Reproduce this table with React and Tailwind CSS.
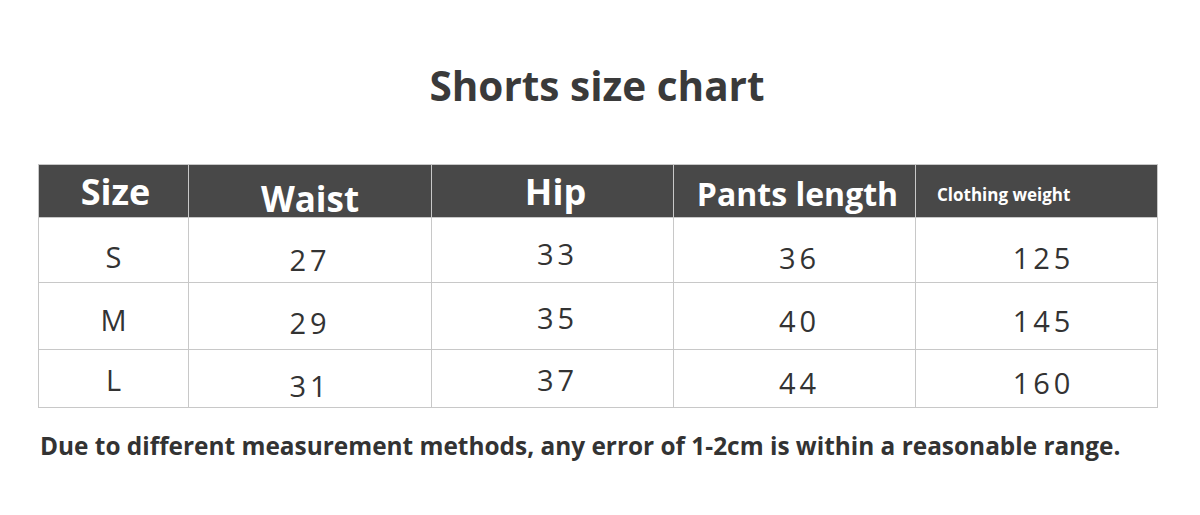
const headers = [
  { label: 'Size', cls: 'text-[36px] pt-[2px] pl-[4px]' },
  { label: 'Waist', cls: 'text-[35px] pt-[14px]' },
  { label: 'Hip', cls: 'text-[36px] pt-[2px] pl-[6px]' },
  { label: 'Pants length', cls: 'text-[32px] pt-[6px] pl-[6px]' },
  { label: 'Clothing weight', cls: 'text-[17px] text-left pl-[21px] pt-[6px]' },
];

// per-cell nudges so the values sit where the chart has them
const shift = ['', '', 'pl-[10px]', 'pl-[10px]', 'pl-[14px]'];

const rows = [
  { h: 'h-[65px]', cells: ['S', '27', '33', '36', '125'], off: ['pt-[12px]', 'pt-[18px]', 'pt-[6px]', 'pt-[14px]', 'pt-[14px]'] },
  { h: 'h-[67px]', cells: ['M', '29', '35', '40', '145'], off: ['pt-[6px]', 'pt-[12px]', 'pt-[2px]', 'pt-[8px]', 'pt-[8px]'] },
  { h: 'h-[58px]', cells: ['L', '31', '37', '44', '160'], off: ['pt-[2px]', 'pt-[14px]', 'pt-[2px]', 'pt-[8px]', 'pt-[8px]'] },
];

export default function App() {
  return (
    <div className="w-[1200px] h-[515px] bg-white text-[#333] font-['Open_Sans',sans-serif] overflow-hidden">
      <h1 className="pt-[58px] pr-[6px] text-center text-[40.5px] font-bold text-[#3a3a3a] leading-[56px]">
        Shorts size chart
      </h1>
      <table className="ml-[38px] mt-[50px] border-collapse border border-[#c8c8c8]">
        <colgroup>
          <col className="w-[150px]" />
          <col className="w-[243px]" />
          <col className="w-[242px]" />
          <col className="w-[242px]" />
          <col className="w-[242px]" />
        </colgroup>
        <thead>
          <tr className="h-[53px] bg-[#484848]">
            {headers.map((c) => (
              <th
                key={c.label}
                className={`border border-[#c8c8c8] text-white font-bold leading-none text-center ${c.cls}`}
              >
                {c.label}
              </th>
            ))}
          </tr>
        </thead>
        <tbody>
          {rows.map((r) => (
            <tr key={r.cells[0]} className={r.h}>
              {r.cells.map((v, i) => (
                <td
                  key={i}
                  className={`border border-[#c8c8c8] text-center text-[29px] leading-none ${i === 0 ? 'font-medium' : 'tracking-[4px]'} ${shift[i]} ${r.off[i]}`}
                >
                  {v}
                </td>
              ))}
            </tr>
          ))}
        </tbody>
      </table>
      <p className="mt-[20px] ml-[40px] text-[24.4px] font-bold text-[#333]">
        Due to different measurement methods, any error of 1-2cm is within a reasonable range.
      </p>
    </div>
  );
}
